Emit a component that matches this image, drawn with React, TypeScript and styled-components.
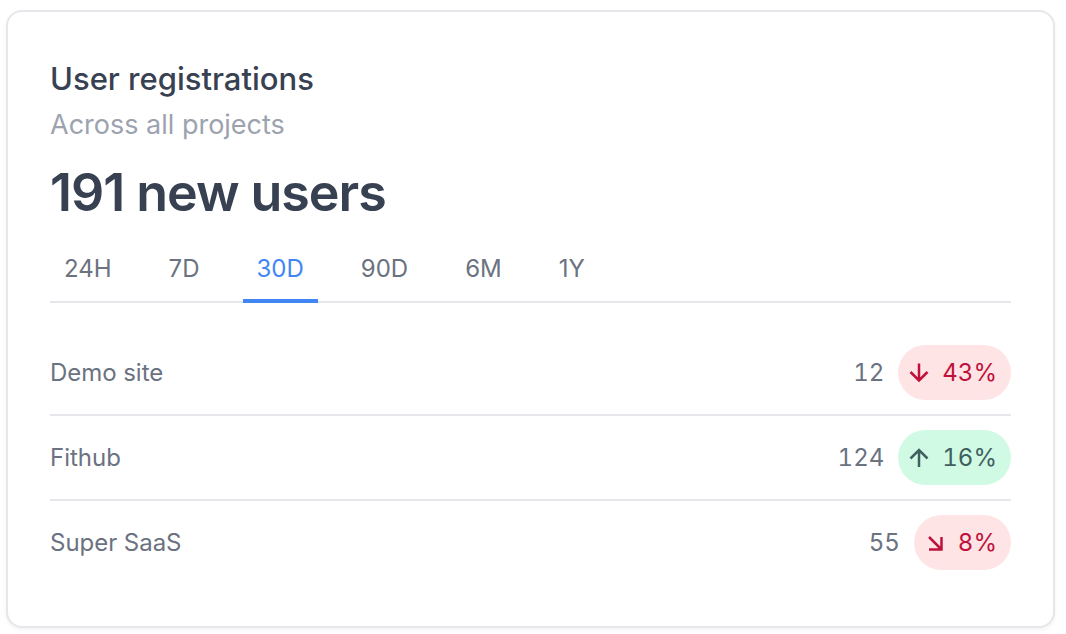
import { useState } from "react";
import styled, { createGlobalStyle } from "styled-components";

const GlobalStyle = createGlobalStyle`
  *, *::before, *::after { box-sizing: border-box; }
  body {
    margin: 0;
    background: #fff;
    font-family: Inter, "Liberation Sans", sans-serif;
    color: #374151;
  }
`;

const Page = styled.main`
  padding: 10px 11px 6px 6px;
`;

const Card = styled.section`
  padding: 42px;
  border: 2px solid #e5e7eb;
  border-radius: 16px;
  background: #fff;
  box-shadow: 0 2px 4px rgba(0, 0, 0, 0.05);
`;

const Title = styled.h2`
  margin: 0;
  font-size: 31px;
  line-height: 50px;
  font-weight: 500;
`;

const Subtitle = styled.p`
  margin: 0;
  font-size: 27px;
  line-height: 42px;
  color: #9ca3af;
`;

const Total = styled.p`
  margin: 16px 0 0;
  font-size: 52px;
  line-height: 62px;
  font-weight: 600;
  letter-spacing: -0.02em;
`;

const Tabs = styled.div`
  display: flex;
  gap: 29px;
  margin-top: 12px;
  border-bottom: 2px solid #e5e7eb;
`;

const Tab = styled.button<{ $active: boolean }>`
  margin: 0 0 -2px;
  padding: 15px 14px 12px;
  border: 0;
  border-bottom: 4px solid ${(p) => (p.$active ? "#4285f4" : "transparent")};
  background: none;
  font: inherit;
  font-size: 24px;
  line-height: 36px;
  color: ${(p) => (p.$active ? "#4285f4" : "#6b7280")};
  cursor: pointer;
`;

const List = styled.ul`
  margin: 28px 0 0;
  padding: 0;
  list-style: none;
`;

const Row = styled.li`
  display: flex;
  align-items: center;
  gap: 14px;
  padding: 14px 0;
  font-size: 24px;
  line-height: 55px;
  color: #6b7280;
  font-variant-numeric: tabular-nums;

  & + & {
    border-top: 2px solid #e5e7eb;
  }
`;

const Name = styled.span`
  flex: 1;
`;

const Badge = styled.span<{ $up: boolean }>`
  display: flex;
  align-items: center;
  gap: 10px;
  padding: 0 14px 0 8px;
  border-radius: 28px;
  background: ${(p) => (p.$up ? "#d1fae5" : "#ffe4e6")};
  color: ${(p) => (p.$up ? "#40605f" : "#be123c")};
`;

const Arrow = styled.svg`
  width: 26px;
  height: 26px;
  fill: none;
  stroke: currentColor;
  stroke-width: 2.5;
`;

type Trend = "down" | "up" | "slight-down";

const paths: Record<Trend, string> = {
  down: "M13 3.5V20.5M4.5 12L13 20.5L21.5 12",
  up: "M13 22V5M4.5 13.5L13 5L21.5 13.5",
  "slight-down": "M7 7L19 19M7 19.5H19.5V7",
};

const periods = ["24H", "7D", "30D", "90D", "6M", "1Y"];

const projects: { name: string; count: number; trend: Trend; change: string }[] = [
  { name: "Demo site", count: 12, trend: "down", change: "43%" },
  { name: "Fithub", count: 124, trend: "up", change: "16%" },
  { name: "Super SaaS", count: 55, trend: "slight-down", change: "8%" },
];

export default function App() {
  const [period, setPeriod] = useState("30D");
  return (
    <Page>
      <GlobalStyle />
      <Card>
        <Title>User registrations</Title>
        <Subtitle>Across all projects</Subtitle>
        <Total>191 new users</Total>
        <Tabs role="tablist">
          {periods.map((p) => (
            <Tab
              key={p}
              type="button"
              role="tab"
              aria-selected={p === period}
              $active={p === period}
              onClick={() => setPeriod(p)}
            >
              {p}
            </Tab>
          ))}
        </Tabs>
        <List>
          {projects.map((p) => (
            <Row key={p.name}>
              <Name>{p.name}</Name>
              <span>{p.count}</span>
              <Badge $up={p.trend === "up"}>
                <Arrow viewBox="0 0 26 26" aria-hidden="true">
                  <path d={paths[p.trend]} />
                </Arrow>
                {p.change}
              </Badge>
            </Row>
          ))}
        </List>
      </Card>
    </Page>
  );
}
